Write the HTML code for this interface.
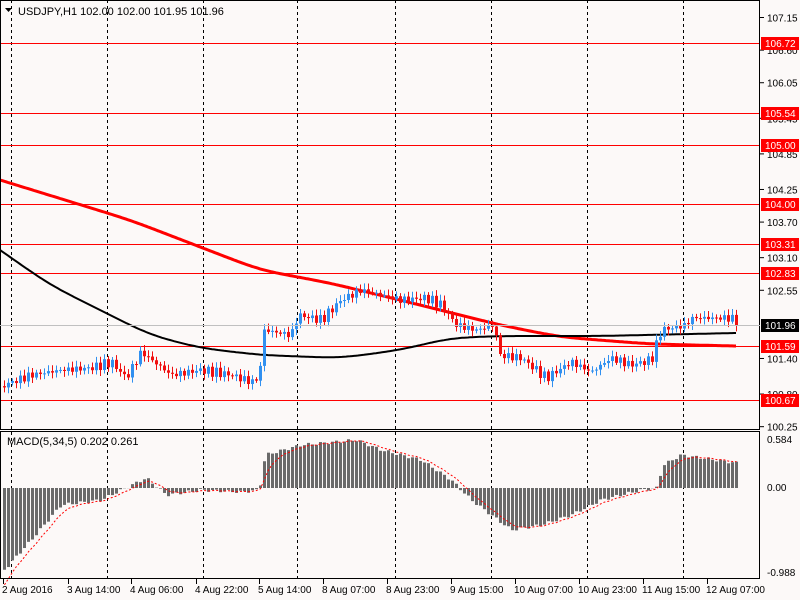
<!DOCTYPE html>
<html><head><meta charset="utf-8"><style>
html,body{margin:0;padding:0;background:#fcf9f8;}
svg{display:block;font-family:"Liberation Sans",sans-serif;}
</style></head><body>
<svg id="s" width="800" height="600" xmlns="http://www.w3.org/2000/svg">
<rect width="800" height="600" fill="#fcf9f8"/>
<g id="grid"></g>
<g id="hl"></g>
<g id="ma"></g>
<g id="cd"></g>
<g id="mc"></g>
<rect x="0.5" y="0.5" width="759" height="429" fill="none" stroke="#000"/>
<rect x="0.5" y="431.5" width="759" height="147" fill="none" stroke="#000"/>
<text x="18" y="15" font-size="11" fill="#000">USDJPY,H1  102.00 102.00 101.95 101.96</text>
<path d="M5 8h7l-3.5 4z" fill="#000"/>
<text x="7" y="445" font-size="11" fill="#000">MACD(5,34,5) 0.202 0.261</text>
<g id="ax" font-size="10" fill="#000"></g>
<g id="bx" font-size="10" fill="#000"></g>
</svg>
<script>
const NS="http://www.w3.org/2000/svg";
function el(p,t,a,txt){const e=document.createElementNS(NS,t);for(const k in a)e.setAttribute(k,a[k]);if(txt!=null)e.textContent=txt;document.getElementById(p).appendChild(e);return e;}
const gx=[11,107,203,297,395,491,587,683];
gx.forEach(x=>{el('grid','line',{x1:x+.5,y1:0,x2:x+.5,y2:430,stroke:'#000','stroke-dasharray':'3,3'});el('grid','line',{x1:x+.5,y1:432,x2:x+.5,y2:579,stroke:'#000','stroke-dasharray':'3,3'});});
const Y=p=>43+(106.72-p)*59.3;
const hls=[["106.72",43],["105.54",113],["105.00",145],["104.00",204],["103.31",244],["102.83",273],["101.59",346],["100.67",400]];
hls.forEach(([t,y])=>{el('hl','line',{x1:0,y1:y+.5,x2:760,y2:y+.5,stroke:'#f00'});});
[107.15,106.60,106.05,105.45,104.85,104.25,103.70,103.10,102.55,101.40,100.80,100.25].forEach(p=>{const y=Y(p);el('ax','line',{x1:760,y1:y,x2:764,y2:y,stroke:'#000'});el('ax','text',{x:767,y:y+4},p.toFixed(2));});
el('ax','line',{x1:0,y1:325.5,x2:760,y2:325.5,stroke:'#c0c0c0'});
hls.forEach(([t,y])=>{el('ax','rect',{x:761,y:y-6,width:38,height:13,fill:'#f00'});el('ax','text',{x:765,y:y+4,fill:'#fff'},t);});
el('ax','rect',{x:761,y:319,width:38,height:13,fill:'#000'});el('ax','text',{x:765,y:329,fill:'#fff'},'101.96');
el('ax','text',{x:767,y:443},'0.584');el('ax','text',{x:767,y:491},'0.00');el('ax','text',{x:767,y:576},'-0.988');
const bl=[[2,"2 Aug 2016"],[67,"3 Aug 14:00"],[130,"4 Aug 06:00"],[195,"4 Aug 22:00"],[258,"5 Aug 14:00"],[322,"8 Aug 07:00"],[386,"8 Aug 23:00"],[450,"9 Aug 15:00"],[514,"10 Aug 07:00"],[578,"10 Aug 23:00"],[642,"11 Aug 15:00"],[706,"12 Aug 07:00"]];
bl.forEach(([x,t])=>{el('bx','line',{x1:x+1.5,y1:579,x2:x+1.5,y2:584,stroke:'#000'});el('bx','text',{x:x,y:593},t);});
function interp(pts,x){for(let i=1;i<pts.length;i++){if(x<=pts[i][0]){const a=pts[i-1],b=pts[i];return a[1]+(b[1]-a[1])*(x-a[0])/(b[0]-a[0]);}}return pts[pts.length-1][1];}
function poly(pts,stroke,w){let ys=[];for(let x=0;x<=736;x+=2)ys.push(interp(pts,x));
 for(let k=0;k<3;k++){ys=ys.map((v,i)=>{const a=ys[Math.max(0,i-6)],b=ys[Math.min(ys.length-1,i+6)];return i<6||i>ys.length-7?v:(a+v*2+b)/4;});}
 let d='';ys.forEach((v,i)=>d+=(i?'L':'M')+(i*2)+' '+v.toFixed(1));el('ma','path',{d:d,fill:'none',stroke:stroke,'stroke-width':w});}
poly([[0,180],[130,220],[260,270],[330,283],[420,305],[500,325],[560,337],[650,344],[736,346]],'#f00',3);
poly([[0,250],[50,285],[100,310],[150,335],[200,348],[260,355],[340,358],[400,350],[450,338],[500,336],[600,336],[736,333]],'#000',2);
const pp=[[3,385],[30,375],[60,370],[90,368],[110,362],[125,378],[140,352],[170,375],[200,370],[230,375],[250,382],[258,378],[262,330],[290,335],[297,315],[320,320],[340,300],[360,290],[380,295],[400,300],[425,298],[440,305],[455,325],[475,330],[494,325],[497,355],[520,358],[545,378],[570,362],[590,372],[610,358],[630,365],[650,360],[660,330],[685,325],[690,318],[730,318],[736,323]];
let prev=interp(pp,0);
for(let x=3;x<=735;x+=4){
  const c=interp(pp,x)+Math.sin(x*0.9)*3+Math.sin(x*2.3)*2;
  const o=prev;prev=c;
  const up=c<o;const col=up?'#3090f0':'#f01010';
  const top=Math.min(o,c),bot=Math.max(o,c);
  const hi=top-2-Math.abs(Math.sin(x*1.7))*4,lo=bot+2+Math.abs(Math.cos(x*1.3))*4;
  el('cd','line',{x1:x+1.5,y1:hi,x2:x+1.5,y2:lo,stroke:col});
  el('cd','rect',{x:x,y:top,width:3,height:Math.max(1,bot-top),fill:col});
}
const mp=[[3,570],[30,540],[60,505],[100,500],[120,490],[145,478],[165,495],[200,490],[240,492],[258,490],[264,455],[300,445],[355,440],[380,450],[420,460],[450,480],[470,500],[510,530],[540,525],[570,515],[600,500],[640,490],[655,488],[662,465],[680,455],[735,463]];
let sig='';let s=null;const Z=488;
for(let x=3;x<=735;x+=4){
  const v=interp(mp,x)+Math.sin(x*1.1)*1.5;
  el('mc','rect',{x:x,y:Math.min(v,Z),width:3,height:Math.abs(v-Z),fill:'#6a6a6a'});
  s=s==null?v+15:s+(v-s)*0.35;
  sig+=(sig?'L':'M')+(x+1.5)+' '+s.toFixed(1);
}
el('mc','path',{d:sig,fill:'none',stroke:'#f00','stroke-dasharray':'2,2'});
</script>
</body></html>
